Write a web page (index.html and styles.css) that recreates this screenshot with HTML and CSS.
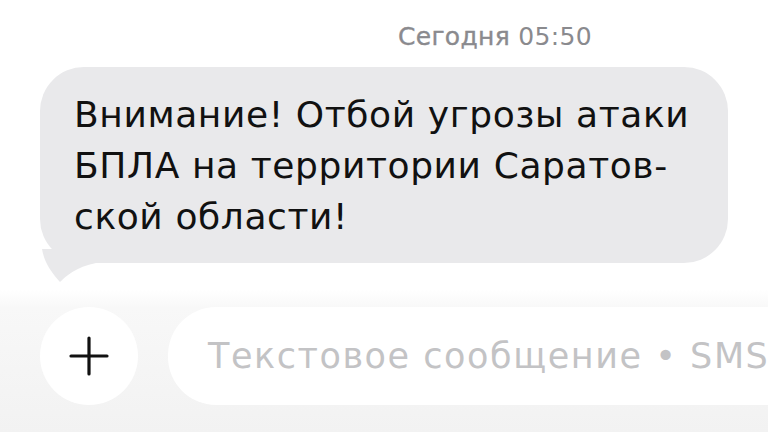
FILE: index.html
```html
<!DOCTYPE html>
<html lang="ru">
<head>
<meta charset="utf-8">
<title>Сообщения</title>
<link rel="stylesheet" href="styles.css">
</head>
<body>
<div class="screen">
  <div class="stamp"><span class="day">Сегодня</span> <span class="time">05:50</span></div>
  <div class="thread">
    <div class="bubble">
      <p class="msg">Внимание! Отбой угрозы атаки<br>БПЛА на территории Саратов-<br>ской области!</p>
      <svg class="tail" width="60" height="40" viewBox="0 0 60 40">
        <path d="M2 0 C4 12 10 22 20 33 C26 27 36 18 56 14 L56 0 Z" fill="#e9e9eb"/>
      </svg>
    </div>
  </div>
  <div class="composer">
    <div class="add">
      <svg width="40" height="40" viewBox="0 0 40 40">
        <path d="M20 2 V38 M2 20 H38" stroke="#111" stroke-width="3.2" stroke-linecap="round"/>
      </svg>
    </div>
    <div class="field"><span class="placeholder">Текстовое сообщение • SMS</span></div>
  </div>
</div>
</body>
</html>
```

FILE: styles.css
```css
html, body {
  margin: 0;
  padding: 0;
  background: #fff;
}

.screen {
  width: 768px;
  height: 432px;
  overflow: hidden;
  display: flex;
  flex-direction: column;
  font-family: "DejaVu Sans", "Noto Sans", sans-serif;
}

.stamp {
  height: 67px;
  box-sizing: border-box;
  padding: 22px 0 0 398px;
  font-size: 25px;
  line-height: 30px;
  color: #8a8a8e;
  letter-spacing: 0.3px;
}

.stamp .day {
  -webkit-text-stroke: 0.35px #8a8a8e;
}

.thread {
  padding-left: 40px;
}

.bubble {
  position: relative;
  width: 688px;
  height: 196px;
  box-sizing: border-box;
  background: #e9e9eb;
  border-radius: 44px;
  padding: 22px 20px 0 34px;
}

.msg {
  margin: 0;
  font-size: 36px;
  line-height: 51px;
  color: #111;
  white-space: nowrap;
  letter-spacing: 0.6px;
}

.tail {
  position: absolute;
  left: 0;
  top: 182px;
}

.composer {
  margin-top: auto;
  height: 142px;
  box-sizing: border-box;
  padding: 17px 0 0 40px;
  display: flex;
  gap: 30px;
  background: linear-gradient(#fff 0, #f8f8f8 18px, #f2f2f2 100%);
}

.add {
  flex: none;
  width: 98px;
  height: 98px;
  border-radius: 50%;
  background: #fff;
  display: flex;
  align-items: center;
  justify-content: center;
}

.field {
  flex: none;
  width: 700px;
  height: 98px;
  border-radius: 48px;
  background: #fff;
  display: flex;
  align-items: center;
  padding-left: 40px;
  box-sizing: border-box;
}

.placeholder {
  font-size: 35px;
  color: #c3c3c5;
  white-space: nowrap;
  letter-spacing: 1.55px;
}
```
